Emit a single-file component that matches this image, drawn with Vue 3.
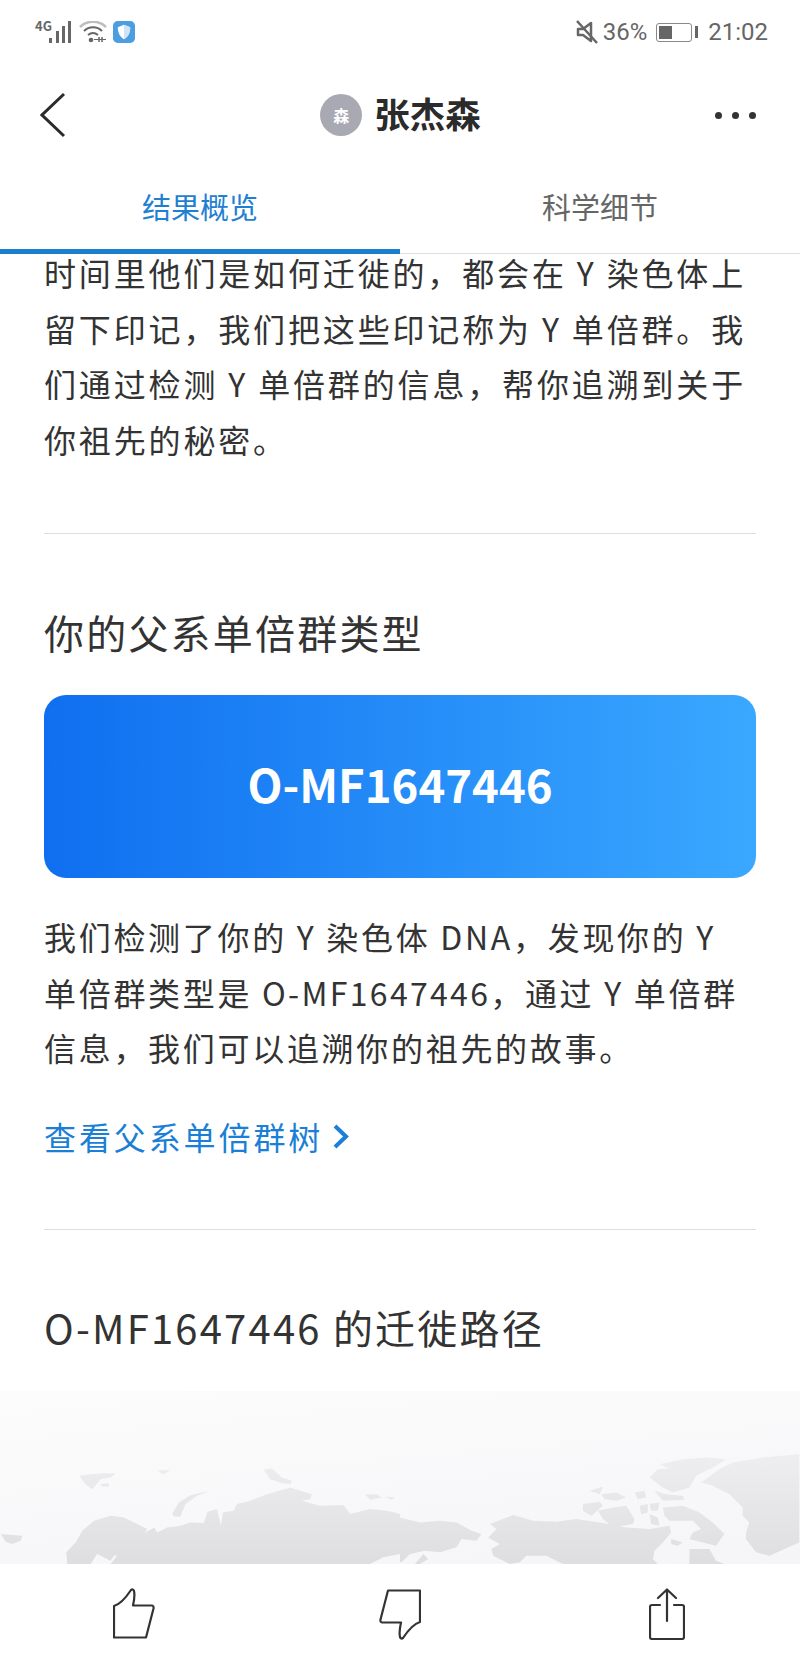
<script setup>
const intro = "时间里他们是如何迁徙的，都会在 Y 染色体上留下印记，我们把这些印记称为 Y 单倍群。我们通过检测 Y 单倍群的信息，帮你追溯到关于你祖先的秘密。";
const haplo = "O-MF1647446";

// 地圖輪廓，座標單位是 1/3 px
const eastLand = [
  "200,555 197,520 225,490 245,455 280,425 330,410 370,415 410,435 440,450 432,462 462,445 470,460 500,445 540,440 570,430 610,432 622,398 650,390 662,440 658,465 668,400 700,395 710,375 750,365 800,345 870,325 900,335 935,345 930,360 905,365 960,380 1030,378 1050,405 1110,390 1160,395 1200,405 1200,525 1150,535 1110,555 330,555 350,530 315,525 305,505 318,480 345,472 385,470 405,482 360,500 330,545 290,525 270,555",
  "0,465 35,468 65,470 60,485 35,495 15,488",
  "235,290 270,285 310,282 345,282 330,295 300,300 275,330 255,315",
  "300,315 325,312 325,322 305,322",
  "470,275 510,272 490,285",
  "515,405 535,370 570,348 630,335 590,350 555,375 540,412 522,412",
  "790,272 815,268 845,295 875,305 870,315 845,312 810,300",
  "620,400 650,392 655,435 632,440 618,425",
  "1095,345 1130,345 1145,355 1110,362",
  "1155,352 1185,355 1175,362",
];
const westLand = [
  "0,415 60,430 120,425 170,430 215,455 245,465 230,485 185,480 170,505 120,520 75,515 30,525 5,550 0,548",
  "45,555 70,525 85,540 60,555",
  "270,435 340,408 400,425 470,428 530,420 600,430 680,445 750,450 810,440 815,460 790,490 765,515 760,540 775,555 490,555 440,530 380,530 360,550 330,555 280,530 275,510 300,495 265,475 290,450",
  "550,375 600,368 610,380 575,410 550,395",
  "595,395 640,385 680,380 705,420 700,435 640,445 610,420",
  "790,385 850,380 900,400 940,430 975,465 950,500 910,490 870,480 880,460 905,450 880,425 840,425 810,425 795,410",
  "720,380 745,375 745,400 725,405",
  "750,375 780,370 775,395 755,395",
  "750,405 775,415 780,440 755,435",
  "570,335 610,322 600,345",
  "605,345 650,340 680,355 650,365 615,360",
  "705,340 735,335 740,355 715,360",
  "765,335 800,345 850,350 855,362 790,365",
  "780,255 850,240 920,235 980,240 950,260 890,290 870,325 820,340 790,325 750,295 775,270 810,268",
  "870,510 930,510 950,545 975,555 870,555",
  "815,480 850,490 835,500 815,495",
  "905,310 960,270 1000,250 1090,235 1200,225 1200,490 1110,530 1070,520 1040,480 1040,460 1050,430 1030,410 1030,385 990,345 940,320",
];
</script>

<template>
  <div class="page">
    <!-- 狀態列 -->
    <div class="status">
      <div class="status-left">
        <span class="net">4G</span>
        <svg class="signal" width="24" height="24" viewBox="0 0 24 24">
          <rect x="1" y="18" width="3" height="5" fill="#666" />
          <rect x="8" y="11" width="3" height="12" fill="#666" />
          <rect x="14" y="6" width="3" height="17" fill="#666" />
          <rect x="20" y="1" width="3" height="22" fill="#666" />
        </svg>
        <svg class="wifi" width="28" height="22" viewBox="0 0 28 22" fill="none">
          <path d="M1 6 C8 -1 20 -1 27 6" stroke="#bdbdbd" stroke-width="2.500" />
          <path d="M5 10 C10 5 18 5 23 10" stroke="#666" stroke-width="2" />
          <path d="M9 14 C12 11.500 16 11.500 19 14" stroke="#666" stroke-width="2" />
          <circle cx="12" cy="19" r="2.300" fill="#666" />
          <path d="M20 16 v5 M23 16 v5" stroke="#666" stroke-width="1.500" />
          <path d="M15 18.500 h12" stroke="#666" stroke-width="1" />
        </svg>
        <svg class="shield" width="22" height="22" viewBox="0 0 23 23">
          <rect width="23" height="23" rx="5" fill="#4b9fe1" />
          <path d="M11.500 4 L18 6.500 C18 12 16 16.500 11.500 19 C7 16.500 5 12 5 6.500 Z" fill="#fff" />
          <path d="M11.500 4 L18 6.500 C18 12 16 16.500 11.500 19 Z" fill="#cfe4f6" />
        </svg>
      </div>
      <div class="status-right">
        <svg width="22" height="24" viewBox="0 0 22 24" fill="none">
          <path d="M2 9 H7 L15 3 V21 L7 15 H2 Z" stroke="#666" stroke-width="2.500" stroke-linejoin="round" />
          <path d="M1 1 L21 23" stroke="#666" stroke-width="2.500" />
        </svg>
        <span class="pct">36%</span>
        <div class="battery"><div class="battery-fill"></div></div>
        <div class="battery-cap"></div>
        <span class="clock">21:02</span>
      </div>
    </div>

    <!-- 標題列 -->
    <div class="header">
      <svg width="26" height="46" viewBox="0 0 26 46" fill="none">
        <path d="M24 2 L2 23 L24 44" stroke="#2b2b2b" stroke-width="3" />
      </svg>
      <div class="title">
        <span class="avatar">森</span>
        <span class="name">张杰森</span>
      </div>
      <div class="dots"><i></i><i></i><i></i></div>
    </div>

    <!-- 分頁 -->
    <div class="tabs">
      <div class="tab active">结果概览</div>
      <div class="tab">科学细节</div>
    </div>

    <div class="scroller">
      <p class="para intro">{{ intro }}</p>
      <hr class="line first" />
      <h2 class="heading">你的父系单倍群类型</h2>
      <div class="haplo-card"><span>{{ haplo }}</span></div>
      <p class="para second">我们检测了你的 Y 染色体 DNA，发现你的 Y 单倍群类型是 <span class="code">{{ haplo }}</span>，通过 Y 单倍群信息，我们可以追溯你的祖先的故事。</p>
      <div class="link">
        查看父系单倍群树
        <svg width="16" height="25" viewBox="0 0 16 25" fill="none">
          <path d="M2 2 L13 12.500 L2 23" stroke="#1a7fd6" stroke-width="4" />
        </svg>
      </div>
      <hr class="line" />
      <h2 class="heading route">{{ haplo }} 的迁徙路径</h2>
      <div class="map">
        <svg width="800" height="173" viewBox="0 35 2400 520">
          <defs>
            <linearGradient id="land" gradientUnits="userSpaceOnUse" x1="0" y1="230" x2="0" y2="555">
              <stop offset="0" stop-color="#eeeef0" />
              <stop offset="1" stop-color="#dedee1" />
            </linearGradient>
          </defs>
          <g fill="url(#land)">
            <polygon v-for="p in eastLand" :key="p" :points="p" />
          </g>
          <g fill="url(#land)" transform="translate(1200 0)">
            <polygon v-for="p in westLand" :key="p" :points="p" />
          </g>
        </svg>
      </div>
    </div>

    <!-- 底部操作 -->
    <div class="actions">
      <svg width="42" height="52" viewBox="0 0 42 52" fill="none">
        <path class="thumb" d="M1 49.500 V18 C8 16 14 8 18 2 Q20 0.500 21 3 C22 7 21 13 20 17.500 H38.500 Q41 17.500 40.500 20.500 L33 49.500 Z" />
      </svg>
      <svg class="down" width="42" height="52" viewBox="0 0 42 52" fill="none">
        <path class="thumb" d="M1 49.500 V18 C8 16 14 8 18 2 Q20 0.500 21 3 C22 7 21 13 20 17.500 H38.500 Q41 17.500 40.500 20.500 L33 49.500 Z" />
      </svg>
      <svg width="36" height="52" viewBox="0 0 36 52" fill="none">
        <path class="thumb" d="M11 17 H3 Q1 17 1 19 V49 Q1 51 3 51 H33 Q35 51 35 49 V19 Q35 17 33 17 H25" />
        <path class="thumb" d="M18 33 V2 M9 10 L18 1.500 L27 10" />
      </svg>
    </div>
  </div>
</template>

<style scoped>
.page {
  width: 800px;
  height: 1662px;
  display: flex;
  flex-direction: column;
  overflow: hidden;
  background: #fff;
  color: #333;
  font-family: "Noto Sans CJK SC", sans-serif;
}
.status {
  height: 64px;
  flex: none;
  display: flex;
  justify-content: space-between;
  align-items: center;
  padding: 0 32px 0 35px;
  color: #666;
}
.status-left, .status-right {
  display: flex;
  align-items: center;
}
.net {
  font-size: 13px;
  font-weight: 700;
  line-height: 11px;
  width: 13px;
  align-self: flex-start;
}
.wifi { margin: 0 6px 0 7px; }
.pct, .clock {
  font: 24px Roboto, sans-serif;
}
.pct { margin-left: 5px; }
.battery {
  width: 36px;
  height: 19px;
  margin-left: 9px;
  border: 1px solid #888;
  border-radius: 3px;
  box-sizing: border-box;
  padding: 2px;
}
.battery-fill {
  width: 13px;
  height: 100%;
  background: #666;
}
.battery-cap {
  width: 3px;
  height: 12px;
  margin-left: 3px;
  background: #666;
}
.clock { margin-left: 10px; }
.header {
  height: 102px;
  flex: none;
  display: flex;
  justify-content: space-between;
  align-items: center;
  padding: 0 44px 0 40px;
}
.title {
  display: flex;
  align-items: center;
  gap: 12px;
  margin-left: 20px;
}
.avatar {
  width: 42px;
  height: 42px;
  border-radius: 50%;
  background: #a9a9b3;
  color: #fff;
  font-size: 16px;
  font-weight: 700;
  display: flex;
  align-items: center;
  justify-content: center;
}
.name {
  font-size: 35.500px;
  font-weight: 700;
  color: #2b2b2b;
  line-height: 46px;
  margin-top: -5px;
}
.dots {
  display: flex;
  gap: 10px;
}
.dots i {
  width: 7px;
  height: 7px;
  border-radius: 50%;
  background: #333;
}
.tabs {
  height: 88px;
  flex: none;
  display: flex;
  border-bottom: 1px solid #ddd;
  box-sizing: border-box;
}
.tab {
  flex: 1;
  text-align: center;
  font-size: 29px;
  line-height: 80px;
  color: #666;
}
.tab.active {
  color: #1f7fd2;
  border-bottom: 5px solid #1a7fd0;
  margin-bottom: -1px;
}
.scroller {
  flex: 1;
  min-height: 0;
  overflow: hidden;
}
.para {
  margin: 0 44px;
  font-size: 32px;
  line-height: 55.500px;
  letter-spacing: 2.700px;
}
.intro {
  margin-top: -9px;
  letter-spacing: 2.850px;
}
.code { letter-spacing: 2.300px; }
.line {
  margin: 0 44px;
  border: none;
  border-top: 1px solid #ddd;
}
.line.first { margin-top: 66px; }
.heading {
  margin: 68px 44px 0;
  font-size: 40px;
  font-weight: 400;
  line-height: 60px;
  letter-spacing: 2.200px;
  color: #333;
}
.haplo-card {
  margin: 33px 44px 0;
  height: 183px;
  padding-bottom: 8px;
  box-sizing: border-box;
  border-radius: 22px;
  background: linear-gradient(90deg, #0f6ff0, #3aa8ff);
  color: #fff;
  font-size: 45.500px;
  font-weight: 700;
  display: flex;
  align-items: center;
  justify-content: center;
}
.second { margin-top: 31px; }
.link {
  margin: 33px 44px 65px;
  display: flex;
  align-items: center;
  gap: 10px;
  font-size: 32px;
  line-height: 55px;
  letter-spacing: 2.900px;
  color: #1a7fd6;
}
.route { margin-top: 67px; }
.map {
  margin-top: 34px;
  height: 173px;
  background: linear-gradient(175deg, #fcfcfd 0%, #f5f5f7 100%);
}
.map svg { display: block; }
.actions {
  height: 97px;
  flex: none;
  box-sizing: border-box;
  display: flex;
  align-items: flex-start;
  justify-content: space-between;
  padding: 23px 115px 0 113px;
  background: #fff;
}
.down {
  transform: rotate(180deg);
  margin-left: -4px;
}
.thumb {
  stroke: #333;
  stroke-width: 2.200;
  stroke-linejoin: round;
  stroke-linecap: round;
}
</style>
<style>
body { background: #fff; }
</style>
